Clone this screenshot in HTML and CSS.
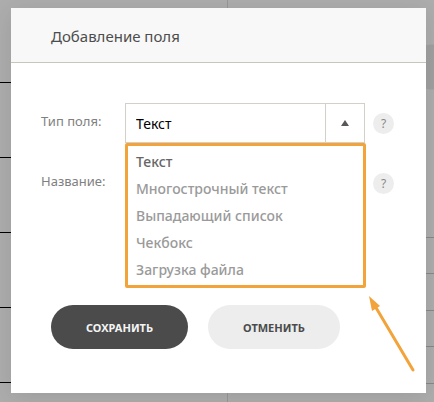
FILE: index.html
```html
<!DOCTYPE html>
<html lang="ru">
<head>
    <meta charset="UTF-8">
    <meta name="viewport" content="width=device-width, initial-scale=1.0">
    <title>Добавление поля</title>
    <link rel="stylesheet" href="styles.css">
</head>
<body>
    <form class="modal" role="dialog" aria-labelledby="modal-title">
        <header class="modal-header">
            <h1 id="modal-title">Добавление поля</h1>
        </header>

        <div class="modal-body">
            <!-- Field type -->
            <div class="row">
                <label for="field-type">Тип поля:</label>
                <div class="control">
                    <select id="field-type" class="field">
                        <option selected>Текст</option>
                        <option>Многострочный текст</option>
                        <option>Выпадающий список</option>
                        <option>Чекбокс</option>
                        <option>Загрузка файла</option>
                    </select>
                    <span class="select-arrow" aria-hidden="true">
                        <svg width="8" height="6" viewBox="0 0 8 6"><path d="M4 0L8 6H0z" fill="#585858"/></svg>
                    </span>
                    <ul class="menu" role="listbox" aria-label="Тип поля">
                        <li role="option" aria-selected="true" class="selected">Текст</li>
                        <li role="option">Многострочный текст</li>
                        <li role="option">Выпадающий список</li>
                        <li role="option">Чекбокс</li>
                        <li role="option">Загрузка файла</li>
                    </ul>
                </div>
                <button type="button" class="help">?</button>
            </div>

            <!-- Field name -->
            <div class="row">
                <label for="field-name">Название:</label>
                <div class="control">
                    <input id="field-name" class="field" type="text">
                </div>
                <button type="button" class="help">?</button>
            </div>

            <!-- Buttons -->
            <div class="actions">
                <button type="submit" class="btn btn-save">СОХРАНИТЬ</button>
                <button type="button" class="btn btn-cancel">ОТМЕНИТЬ</button>
            </div>
        </div>

        <!-- Pointer to the open list -->
        <svg class="pointer" width="48" height="78" viewBox="0 0 48 78" aria-hidden="true">
            <path d="M7 10L45 74" stroke="#f2a33a" stroke-width="3" stroke-linecap="round" fill="none"/>
            <path d="M1 0L12 10L4 15z" fill="#f2a33a"/>
        </svg>
    </form>
</body>
</html>
```
FILE: styles.css
```css
* {
    box-sizing: border-box;
}

/* Dimmed page behind the modal */
body {
    margin: 0;
    min-height: 100vh;
    padding: 8px 8px 9px 11px;
    font-family: "Noto Sans", "Open Sans", sans-serif;
    font-size: 14px;
    color: #808080;
    background-color: #adadad;
    background-image:
        radial-gradient(circle at 432px 67px, #a0a0a0 22px, transparent 23px),
        linear-gradient(#989898, #989898),
        repeating-linear-gradient(transparent 0 74px, #000 74px 75px),
        repeating-linear-gradient(#888 0 1px, transparent 1px 36px, #888 36px 37px, transparent 37px 73px);
    background-size: auto, 1px 100%, 11px 100%, 8px 165px;
    background-position: 0 0, 227px 0, 0 8px, right 237px;
    background-repeat: no-repeat;
}

/* Modal */
.modal {
    position: relative;
    background: #fff;
    box-shadow: 0 4px 22px rgba(0, 0, 0, 0.1);
}

.modal-header {
    padding: 16px 40px 14px;
    background: #f8f8f8;
    border-bottom: 1px solid #c6c6bc;
}

.modal-header h1 {
    margin: 0;
    font-size: 15px;
    line-height: 24px;
    font-weight: 400;
    color: #4d4d4d;
}

.modal-body {
    padding: 40px 32px 44px 30px;
}

/* Rows */
.row {
    display: grid;
    grid-template-columns: 76px 1fr 21px;
    column-gap: 8px;
    align-items: center;
    margin-bottom: 20px;
}

.row label {
    padding-bottom: 4px;
    font-size: 13px;
}

.control {
    position: relative;
}

.field {
    display: block;
    width: 100%;
    height: 40px;
    padding: 0 50px 0 10px;
    border: 1px solid #d5cfca;
    border-radius: 0;
    background: #fff;
    font: inherit;
    color: #000;
    outline: none;
    appearance: none;
}

.select-arrow {
    position: absolute;
    top: 0;
    right: 0;
    width: 40px;
    height: 40px;
    display: flex;
    align-items: center;
    justify-content: center;
    border: 1px solid #d5cfca;
    pointer-events: none;
}

/* Open list */
.menu {
    position: absolute;
    z-index: 1;
    top: 100%;
    left: 0;
    right: -1px;
    margin: 0;
    padding: 2px 8px;
    list-style: none;
    background: #fff;
    border: 3px solid #f2a33a;
    border-radius: 2px;
    font-weight: 500;
    line-height: 27px;
    color: #9a9a9a;
}

.menu .selected {
    color: #666;
}

.help {
    width: 21px;
    height: 21px;
    padding: 0;
    border: none;
    border-radius: 50%;
    background: #ededed;
    font: inherit;
    font-size: 12px;
    line-height: 21px;
    color: #888;
    cursor: pointer;
}

/* Buttons */
.actions {
    display: flex;
    gap: 20px;
    margin-top: 102px;
    padding-left: 10px;
}

.btn {
    height: 44px;
    padding: 0 35px;
    border: none;
    border-radius: 22px;
    font: inherit;
    font-size: 11px;
    font-weight: 700;
    cursor: pointer;
}

.btn-save {
    background: #4b4b4b;
    color: #f4f4f4;
}

.btn-cancel {
    background: #ededed;
    color: #4b4b4b;
}

.pointer {
    position: absolute;
    right: 10px;
    bottom: 19px;
}
```
